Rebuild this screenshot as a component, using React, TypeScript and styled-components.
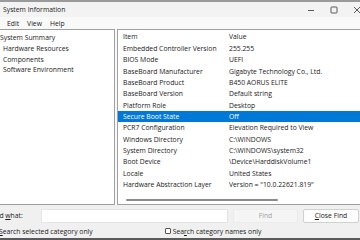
import React from "react";
import styled, { createGlobalStyle } from "styled-components";

const GlobalStyle = createGlobalStyle`
  html, body { margin: 0; padding: 0; background: #f0f0f0; }
  body { width: 360px; height: 240px; overflow: hidden; font-family: "Open Sans", "Noto Sans", sans-serif; }
  * { box-sizing: border-box; }
`;

const Window = styled.div`
  width: 360px;
  height: 240px;
  display: flex;
  flex-direction: column;
  overflow: hidden;
  background: #f0f0f0;
  font-size: 6.8px;
  color: #1a1a1a;
  border-bottom: 2px solid #5a5a5a;
`;

const TopStrip = styled.div`
  height: 2px;
  background: #9a9a9a;
  flex: none;
`;

const TitleBar = styled.div`
  height: 15px;
  flex: none;
  display: flex;
  align-items: center;
  justify-content: space-between;
  background: #f3f3f3;
  padding-left: 3px;
`;

const Title = styled.span`
  font-size: 6.8px;
`;

const Controls = styled.div`
  display: flex;
  align-items: center;
  margin-right: -8px;
`;

const ControlButton = styled.div`
  width: 23px;
  height: 15px;
  display: flex;
  align-items: center;
  justify-content: center;
`;

const MenuBar = styled.div`
  height: 12px;
  flex: none;
  display: flex;
  align-items: center;
  gap: 8px;
  padding-left: 7px;
  background: #f9f9f9;
`;

const MenuItem = styled.span`
  font-size: 6.8px;
`;

const Main = styled.div`
  flex: 1;
  display: flex;
  gap: 2px;
  min-height: 0;
  background: #f9f9f9;
`;

const TreePanel = styled.div`
  width: 115px;
  flex: none;
  background: #fff;
  border: 1px solid #a0a0a0;
  border-left: none;
  display: flex;
  flex-direction: column;
  padding-top: 3px;
`;

const TreeItem = styled.div<{ $indent: number }>`
  height: 10.8px;
  line-height: 10.8px;
  white-space: nowrap;
  padding-left: ${(p) => p.$indent}px;
`;

const ListPanel = styled.div`
  flex: 1;
  background: #fff;
  border: 1px solid #a0a0a0;
  border-right: none;
  display: flex;
  flex-direction: column;
`;

const Row = styled.div<{ $selected?: boolean; $header?: boolean }>`
  display: grid;
  grid-template-columns: 106px 1fr;
  height: ${(p) => (p.$header ? 13 : 11.33)}px;
  align-items: center;
  padding-left: 5px;
  white-space: nowrap;
  background: ${(p) => (p.$selected ? "#0078d7" : "transparent")};
  color: ${(p) => (p.$selected ? "#fff" : "inherit")};
`;

const Cell = styled.span`
  overflow: hidden;
`;

const HScroll = styled.div`
  margin-top: auto;
  height: 9px;
  display: flex;
  align-items: center;
  padding-left: 8px;
`;

const Thumb = styled.div`
  width: 152px;
  height: 2px;
  border-radius: 1px;
  background: #8a8a8a;
`;

const FindRow = styled.div`
  height: 19px;
  flex: none;
  display: flex;
  align-items: center;
  padding-top: 2px;
`;

const FindLabel = styled.span`
  margin-left: -10px;
  width: 51px;
  flex: none;
  white-space: nowrap;
`;

const FindInput = styled.div`
  width: 187px;
  height: 14px;
  background: #fff;
  border: 1px solid #e4e4e4;
  flex: none;
`;

const Button = styled.div<{ $disabled?: boolean; $width: number }>`
  height: 14px;
  width: ${(p) => p.$width}px;
  flex: none;
  margin-left: 5px;
  display: flex;
  align-items: center;
  justify-content: center;
  background: ${(p) => (p.$disabled ? "#f5f5f5" : "#fdfdfd")};
  border: 1px solid ${(p) => (p.$disabled ? "#ececec" : "#d0d0d0")};
  border-radius: 2px;
  color: ${(p) => (p.$disabled ? "#a0a0a0" : "#1a1a1a")};
`;

const CheckRow = styled.div`
  height: 14px;
  flex: none;
  display: flex;
  align-items: center;
`;

const CheckLabel = styled.label<{ $offset: number }>`
  display: flex;
  align-items: center;
  gap: 2px;
  margin-left: ${(p) => p.$offset}px;
  white-space: nowrap;
`;

const Box = styled.span`
  width: 6px;
  height: 6px;
  border: 1px solid #555;
  border-radius: 1px;
  background: #fff;
  flex: none;
`;

const U = styled.span`
  text-decoration: underline;
`;

const rows: [string, string][] = [
  ["Embedded Controller Version", "255.255"],
  ["BIOS Mode", "UEFI"],
  ["BaseBoard Manufacturer", "Gigabyte Technology Co., Ltd."],
  ["BaseBoard Product", "B450 AORUS ELITE"],
  ["BaseBoard Version", "Default string"],
  ["Platform Role", "Desktop"],
  ["Secure Boot State", "Off"],
  ["PCR7 Configuration", "Elevation Required to View"],
  ["Windows Directory", "C:\\WINDOWS"],
  ["System Directory", "C:\\WINDOWS\\system32"],
  ["Boot Device", "\\Device\\HarddiskVolume1"],
  ["Locale", "United States"],
  ["Hardware Abstraction Layer", 'Version = "10.0.22621.819"'],
];

export default function App() {
  return (
    <>
      <GlobalStyle />
      <Window>
        <TopStrip />
        <TitleBar>
          <Title>System Information</Title>
          <Controls>
            <ControlButton>
              <svg width="8" height="8" viewBox="0 0 8 8">
                <line x1="1" y1="4.5" x2="7" y2="4.5" stroke="#333" strokeWidth="0.8" />
              </svg>
            </ControlButton>
            <ControlButton>
              <svg width="8" height="8" viewBox="0 0 8 8">
                <rect x="1" y="1" width="6" height="6" rx="0.8" fill="none" stroke="#333" strokeWidth="0.8" />
              </svg>
            </ControlButton>
            <ControlButton>
              <svg width="8" height="8" viewBox="0 0 8 8">
                <path d="M1 1L7 7M7 1L1 7" stroke="#333" strokeWidth="0.8" />
              </svg>
            </ControlButton>
          </Controls>
        </TitleBar>
        <MenuBar>
          <MenuItem>Edit</MenuItem>
          <MenuItem>View</MenuItem>
          <MenuItem>Help</MenuItem>
        </MenuBar>
        <Main>
          <TreePanel>
            <TreeItem $indent={-9}>System Summary</TreeItem>
            <TreeItem $indent={3}>Hardware Resources</TreeItem>
            <TreeItem $indent={3}>Components</TreeItem>
            <TreeItem $indent={3}>Software Environment</TreeItem>
          </TreePanel>
          <ListPanel>
            <Row $header>
              <Cell>Item</Cell>
              <Cell>Value</Cell>
            </Row>
            {rows.map(([k, v]) => (
              <Row key={k} $selected={k === "Secure Boot State"}>
                <Cell>{k}</Cell>
                <Cell>{v}</Cell>
              </Row>
            ))}
            <HScroll>
              <Thumb />
            </HScroll>
          </ListPanel>
        </Main>
        <FindRow>
          <FindLabel>
            Find <U>w</U>hat:
          </FindLabel>
          <FindInput />
          <Button $disabled $width={65}>Find</Button>
          <Button $width={56}>
            <span>
              <U>C</U>lose Find
            </span>
          </Button>
        </FindRow>
        <CheckRow>
          <CheckLabel $offset={-9}>
            <Box />
            <span>
              <U>S</U>earch selected category only
            </span>
          </CheckLabel>
          <CheckLabel $offset={72}>
            <Box />
            <span>
              Sea<U>r</U>ch category names only
            </span>
          </CheckLabel>
        </CheckRow>
      </Window>
    </>
  );
}
